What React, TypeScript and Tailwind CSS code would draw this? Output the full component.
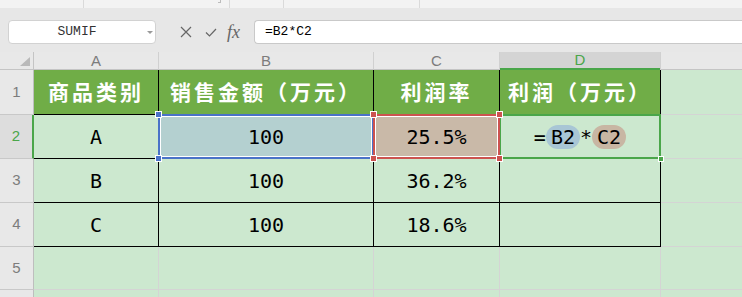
import React from "react";

const mono = "font-['DejaVu_Sans_Mono',monospace]";
const cjk = "font-['Noto_Sans_CJK_SC',sans-serif]";

const headers = ["商品类别", "销售金额（万元）", "利润率", "利润（万元）"];
const rows = [
  ["A", "100", "25.5%"],
  ["B", "100", "36.2%"],
  ["C", "100", "18.6%"],
];

const Handle = ({ pos, color }: { pos: string; color: string }) => (
  <span className={`absolute h-[7px] w-[7px] border border-white ${pos} ${color}`} />
);

export default function App() {
  return (
    <div className="h-[297px] w-[742px] overflow-hidden bg-[#e7e7e7] font-['Liberation_Sans',sans-serif]">
      {/* ribbon bottom strip */}
      <div className="flex h-[8px] bg-[#f3f3f3]">
        <div className="w-[84px] border-r border-[#dadada]" />
        <div className="relative w-[146px] border-r border-[#dadada]">
          <span className="absolute right-[8px] top-0 h-[3px] w-[3px] border-b border-r border-[#bcbcbc]" />
        </div>
        <div className="w-[54px] border-r border-[#dadada]" />
        <div className="w-[136px] border-r border-[#dadada]" />
      </div>

      {/* formula bar */}
      <div className="flex h-[44px] items-start pl-[8px] pt-[12px]">
        <div className="relative flex h-[24px] w-[148px] items-center rounded-[4px] border border-[#d2d2d2] bg-white">
          <span className="w-full pr-[10px] text-center font-['Liberation_Mono',monospace] text-[13px] text-[#333]">
            SUMIF
          </span>
          <span className="absolute right-[2px] top-[10px] h-0 w-0 border-x-[3px] border-t-[3px] border-x-transparent border-t-[#9a9a9a]" />
        </div>
        <div className="flex h-[24px] w-[98px] items-center">
          <svg className="ml-[24px]" width="12" height="12" viewBox="0 0 12 12">
            <path d="M1 1 L11 11 M11 1 L1 11" stroke="#666" strokeWidth="1.2" fill="none" />
          </svg>
          <svg className="ml-[13px]" width="12" height="9" viewBox="0 0 12 9">
            <path d="M1 4.5 L4.5 8 L11 1" stroke="#666" strokeWidth="1.2" fill="none" />
          </svg>
          <span className="ml-[10px] font-['Liberation_Serif',serif] text-[18px] italic leading-none text-[#666]">
            fx
          </span>
        </div>
        <div className="flex h-[24px] flex-1 items-center rounded-l-[4px] border-y border-l border-[#c9c9c9] bg-white pl-[10px] font-['Liberation_Mono',monospace] text-[13px] text-black">
          =B2*C2
        </div>
      </div>

      {/* sheet */}
      <div className="grid h-[245px] grid-cols-[34px_125px_215px_126px_161px_1fr] grid-rows-[18px_45px_44px_44px_44px_43px_1fr]">
        {/* column headers */}
        <div className="relative border-b border-r border-[#c4c4c4] bg-[#e8e8e8]">
          <svg className="absolute left-[20px] top-[5px]" width="10" height="9" viewBox="0 0 10 9">
            <polygon points="10,0 10,9 0,9" fill="#b9b9b9" />
          </svg>
        </div>
        {["A", "B", "C"].map((c) => (
          <div
            key={c}
            className="flex items-end justify-center border-b border-r border-b-[#c4c4c4] border-r-[#d0d0d0] bg-[#e8e8e8] pb-[1px] text-[15px] leading-none text-[#7c7c7c]"
          >
            {c}
          </div>
        ))}
        <div className="flex flex-col border-r border-[#d0d0d0] bg-[#e8e8e8]">
          <div className="flex flex-1 items-end justify-center border-b-2 border-[#4aa64a] bg-[#d4d4d4] text-[15px] leading-none text-[#4aa64a]">
            <span className="pb-[1px]">D</span>
          </div>
        </div>
        <div className="border-b border-[#c4c4c4] bg-[#e8e8e8]" />

        {/* row 1 */}
        <div className="flex items-center justify-center border-b border-r border-b-[#c8c8c8] border-r-[#bebebe] bg-[#e8e8e8] text-[15px] text-[#7c7c7c]">
          1
        </div>
        {headers.map((h) => (
          <div
            key={h}
            className={`flex items-center justify-center border-b border-r border-black bg-[#70ad47] text-[21px] font-bold tracking-[3px] text-white ${cjk}`}
          >
            {h}
          </div>
        ))}
        <div className="border-b border-[#d4d4d4] bg-[#cce8cf]" />

        {/* rows 2-4 */}
        {rows.map((r, i) => {
          const active = i === 0;
          return (
            <React.Fragment key={r[0]}>
              <div
                className={
                  active
                    ? "flex items-center justify-center border-b border-r-2 border-b-[#c8c8c8] border-r-[#4aa64a] bg-[#dddddd] text-[15px] text-[#4aa64a]"
                    : "flex items-center justify-center border-b border-r border-b-[#c8c8c8] border-r-[#bebebe] bg-[#e8e8e8] text-[15px] text-[#7c7c7c]"
                }
              >
                {i + 2}
              </div>
              <div className={`flex items-center justify-center border-b border-r border-black bg-[#cce8cf] text-[20px] text-black ${mono}`}>
                {r[0]}
              </div>
              <div
                className={`relative flex items-center justify-center border-b border-r border-black text-[20px] text-black ${mono} ${
                  active ? "bg-[#b4d0d0]" : "bg-[#cce8cf]"
                }`}
              >
                {r[1]}
                {active && (
                  <>
                    <div className="pointer-events-none absolute -inset-px z-10 border-2 border-[#4a72c8]">
                      <div className="h-full w-full border border-white" />
                    </div>
                    <Handle pos="z-10 -left-[4px] -top-[4px]" color="bg-[#4a72c8]" />
                    <Handle pos="z-10 -left-[4px] -bottom-[4px]" color="bg-[#4a72c8]" />
                  </>
                )}
              </div>
              <div
                className={`relative flex items-center justify-center border-b border-r border-black text-[20px] text-black ${mono} ${
                  active ? "bg-[#c9b9a8]" : "bg-[#cce8cf]"
                }`}
              >
                {r[2]}
                {active && (
                  <>
                    <div className="pointer-events-none absolute -inset-px z-20 border-2 border-[#cc5350]">
                      <div className="h-full w-full border border-white" />
                    </div>
                    <Handle pos="z-20 -left-[4px] -top-[4px]" color="bg-[#cc5350]" />
                    <Handle pos="z-20 -right-[4px] -top-[4px]" color="bg-[#cc5350]" />
                    <Handle pos="z-20 -left-[4px] -bottom-[4px]" color="bg-[#cc5350]" />
                    <Handle pos="z-20 -right-[4px] -bottom-[4px]" color="bg-[#cc5350]" />
                  </>
                )}
              </div>
              <div className={`relative flex items-center justify-center border-b border-r border-black bg-[#cce8cf] text-[20px] text-black ${mono}`}>
                {active && (
                  <>
                    <div className="flex items-center">
                      <span>=</span>
                      <span className="flex h-[24px] items-center rounded-full bg-[#a8c6d5] px-[5px]">B2</span>
                      <span>*</span>
                      <span className="flex h-[24px] items-center rounded-full bg-[#c8b6a3] px-[5px]">C2</span>
                    </div>
                    <div className="pointer-events-none absolute -inset-px z-[5] border-2 border-[#4aa64a]" />
                    <span className="absolute -bottom-[4px] -right-[4px] z-[5] h-[6px] w-[6px] border border-white bg-[#4aa64a]" />
                  </>
                )}
              </div>
              <div className="border-b border-[#d4d4d4] bg-[#cce8cf]" />
            </React.Fragment>
          );
        })}

        {/* row 5 */}
        <div className="flex items-center justify-center border-b border-r border-b-[#c8c8c8] border-r-[#bebebe] bg-[#e8e8e8] text-[15px] text-[#7c7c7c]">
          5
        </div>
        <div className="border-b border-r border-[#d4d4d4] bg-[#cce8cf]" />
        <div className="border-b border-r border-[#d4d4d4] bg-[#cce8cf]" />
        <div className="border-b border-r border-[#d4d4d4] bg-[#cce8cf]" />
        <div className="border-b border-r border-[#d4d4d4] bg-[#cce8cf]" />
        <div className="border-b border-[#d4d4d4] bg-[#cce8cf]" />

        {/* row 6 (partial) */}
        <div className="border-r border-[#bebebe] bg-[#e8e8e8]" />
        <div className="border-r border-[#d4d4d4] bg-[#cce8cf]" />
        <div className="border-r border-[#d4d4d4] bg-[#cce8cf]" />
        <div className="border-r border-[#d4d4d4] bg-[#cce8cf]" />
        <div className="border-r border-[#d4d4d4] bg-[#cce8cf]" />
        <div className="bg-[#cce8cf]" />
      </div>
    </div>
  );
}
